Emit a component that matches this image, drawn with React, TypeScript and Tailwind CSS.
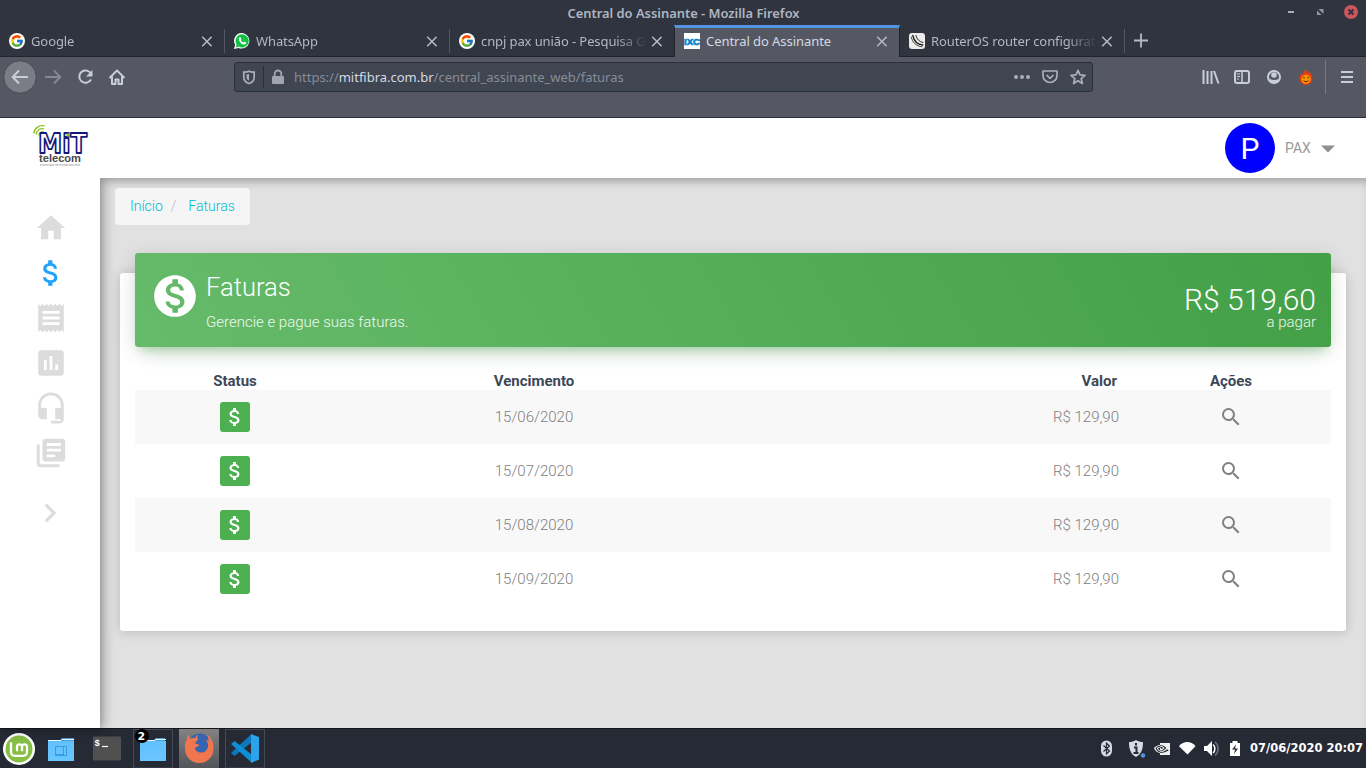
import type { ReactNode } from "react";
import { FcGoogle } from "react-icons/fc";
import { BsNvidia } from "react-icons/bs";
import {
  MdAssessment,
  MdAttachMoney,
  MdChevronRight,
  MdHeadsetMic,
  MdHome,
  MdLibraryBooks,
  MdMonetizationOn,
  MdReceipt,
  MdSearch,
} from "react-icons/md";

const GoogleIcon = () => (
  <span className="flex size-4 items-center justify-center rounded-full bg-white">
    <FcGoogle size={14} />
  </span>
);

const WhatsAppIcon = () => (
  <svg viewBox="0 0 16 16" className="size-4">
    <path d="M8.2 0A7.8 7.8 0 1 1 4.4 14.9L0 16l1.2-4.2A7.8 7.8 0 0 1 8.2 0z" fill="#fff" />
    <path d="M8.2 1.3A6.6 6.6 0 1 1 4.8 13.6L1.7 14.4l.9-3A6.6 6.6 0 0 1 8.2 1.3z" fill="#12c143" />
    <path d="M5.7 4.3c.4-.3.8-.2 1 .2l.6 1.4c.1.3-.5.8-.6 1.1.6 1.2 1.5 2 2.7 2.5.4 0 .8-.9 1.1-.8l1.5.7c.3.2.1 1-.3 1.5-1 .9-2.3.6-3.6 0C6.6 10.1 5.4 8.7 5 7.3c-.3-1.200 0-2.400.7-3z" fill="#fff" />
  </svg>
);

const IxcIcon = () => (
  <svg viewBox="0 0 16 16" className="size-4">
    <rect width="16" height="16" fill="#fff" />
    <text x="0" y="12" textLength="16" lengthAdjust="spacingAndGlyphs" fill="#0a83c9" stroke="#0a83c9" strokeWidth=".7" className="font-['Liberation_Sans'] text-[9.5px] font-bold">IXC</text>
  </svg>
);

const RouterIcon = () => (
  <svg viewBox="0 0 16 16" className="size-4">
    <rect width="16" height="16" rx="3" fill="#ececec" />
    <g fill="none" stroke="#1a1a1a" strokeLinecap="round">
      <path d="M2.3 4C3.3 9.5 7 13 13 13.8" strokeWidth=".8" />
      <path d="M3.8 2.5C5 8 8.5 11.5 13.8 12" strokeWidth="1.3" />
      <path d="M7 2.5C7.5 6 10.5 9 14 9.5" strokeWidth=".9" />
    </g>
  </svg>
);

function Tab({ icon, title, active, line = true }: { icon: ReactNode; title: string; active?: boolean; line?: boolean }) {
  return (
    <div
      className={
        active
          ? "relative z-10 -ml-px flex h-8 w-[226px] border-x border-t-3 border-x-[#22242c] border-t-[#5294e2] bg-[#555863] pl-[9px] text-[#d3dae3]"
          : "relative flex h-8 w-[225px] border-b border-b-[#22242c] pl-[9px] pt-[3px] text-[#b0b8c4]"
      }
    >
      <span className="mt-[5px] h-4 w-4 shrink-0">{icon}</span>
      <div
        className={
          active
            ? "h-[26px] w-[172px] shrink-0 overflow-hidden pl-1.5 text-[13px] leading-[27px] tracking-[-0.05px] whitespace-nowrap"
            : "h-[26px] w-[172px] shrink-0 overflow-hidden pl-1.5 text-[13px] leading-[27px] tracking-[-0.1px] whitespace-nowrap [mask-image:linear-gradient(to_right,black_82%,transparent)]"
        }
      >
        {title}
      </div>
      <svg viewBox="0 0 11 11" className="mt-2 ml-[4px] size-[11px] shrink-0">
        <path d="M1.2.8l9.400 9.400M10.600.8L1.200 10.200" stroke="#b4bac5" strokeWidth="1.5" />
      </svg>
      {line && !active && <span className="absolute top-1 right-0 h-6 w-px bg-[#555862]" />}
    </div>
  );
}

function TitleBar() {
  return (
    <div className="flex h-[25px] items-center pt-0.5">
      <div className="w-[101px]" />
      <div className="flex-1 text-center text-[12.9px] font-semibold text-[#aeb6c2]">Central do Assinante - Mozilla Firefox</div>
      <svg viewBox="0 0 100 25" className="h-[25px] w-[100px]">
        <rect x="22" y="10" width="6" height="2" fill="#a7adb8" />
        <path d="M52.5 8h5v5zM51 9.5v4.500h4.500z" fill="#9298a3" />
        <circle cx="85" cy="11" r="7" fill="#cc575d" />
        <path d="M82.5 8.500l5 5M87.500 8.500l-5 5" stroke="#2f343f" strokeWidth="2" />
      </svg>
    </div>
  );
}

function NavBar() {
  return (
    <div className="flex h-[61px] items-start border-b border-[#2b2d38] bg-[#555863]">
      <svg viewBox="0 0 234 40" className="h-10 w-[234px] shrink-0" fill="none" stroke="#c8ced8" strokeWidth="2">
        <circle cx="20" cy="20" r="16.300" fill="#7a7d85" stroke="#464853" strokeWidth="1" />
        <path d="M13 20h15M19 13.500L12.700 20l6.300 6.500" />
        <g stroke="#868993">
          <path d="M45 20h15M54 13.500l6.300 6.500-6.300 6.500" />
        </g>
        <path d="M91.200 17.200A6.200 6.200 0 1 0 91 22.500" />
        <path d="M92.500 13v6.500h-6.500z" fill="#c8ced8" stroke="none" />
        <path d="M109.500 21L117 13.500l7.500 7.500M112 19.500V27h3.500v-4.500h3V27h3.500v-7.500" strokeLinejoin="round" />
      </svg>
      <div className="mt-[5px] flex h-[30px] w-[859px] shrink-0 items-center rounded-[3px] border border-[#2b2e3a] bg-[#404552]">
        <svg viewBox="0 0 58 28" className="h-7 w-[58px]" fill="none">
          <path d="M14 8.200c1.700.9 3.500.9 5.200.8v5c0 3.500-2 5.500-5.200 6.500-3.200-1-5.200-3-5.200-6.500V9c1.700.1 3.500.1 5.200-.8z" stroke="#a9afba" strokeWidth="1.700" />
          <path d="M14 11v6.800c-1.600-.8-2.500-1.900-2.500-4v-2.400c.9 0 1.700-.1 2.500-.4z" fill="#a9afba" />
          <path d="M28.500 3v22" stroke="#2b2e3a" />
          <rect x="37" y="13" width="12" height="8" rx="1" fill="#a0a6b1" />
          <path d="M39.700 13.500v-2.700a3.300 3.300 0 0 1 6.600 0v2.700" stroke="#a0a6b1" strokeWidth="1.800" />
        </svg>
        <div className="flex-1 pt-px pl-px text-[13px] tracking-[-0.01px] whitespace-nowrap text-[#878c97]">
          https://<span className="text-[#d3dae3]">mitfibra.com.br</span>/central_assinante_web/faturas
        </div>
        <svg viewBox="0 0 92 28" className="h-7 w-[92px]" fill="none" stroke="#a9afba" strokeWidth="1.700">
          <g fill="#a9afba" stroke="none">
            <circle cx="16" cy="14" r="2" />
            <circle cx="22" cy="14" r="2" />
            <circle cx="28" cy="14" r="2" />
          </g>
          <g transform="translate(1 0)" strokeLinejoin="round">
            <path d="M42 8h14v4.500a7 7 0 0 1-14 0z" />
            <path d="M45.500 12l3.500 3.300 3.500-3.300" />
            <path d="M77 7.300l2 4.600 5 .4-3.800 3.300 1.200 4.900-4.400-2.700-4.400 2.700 1.200-4.900-3.800-3.300 5-.4z" />
          </g>
        </svg>
      </div>
      <svg viewBox="0 0 273 40" className="h-10 w-[273px]" fill="none" stroke="#c8ced8">
        <path d="M110.500 13v14M114.500 14v13M118.500 14v13M121 14l4.500 12.500" strokeWidth="2" />
        <rect x="142" y="14" width="14" height="12" rx="2" strokeWidth="2" />
        <path d="M149 14v12" strokeWidth="1.500" />
        <path d="M144 17h3M144 19.500h3M144 22h2" />
        <circle cx="181" cy="20" r="6" strokeWidth="2" />
        <circle cx="181" cy="18" r="2.800" fill="#c8ced8" stroke="none" />
        <path d="M176.500 21.500c2 2 7 2 9 0l-1 4h-7z" fill="#c8ced8" stroke="none" />
        <path d="M212.500 12c1 2 2.500 2.500 2.500 4l2-1.500c0 2 2.500 4 2.500 7a6.500 6.500 0 0 1-13 0c0-3 1.500-3.500 2-5.500l1.500 1.500c.5-2 1.500-3 2.500-5.500z" fill="#e83c17" stroke="none" />
        <circle cx="213" cy="22.300" r="4.500" fill="#f90" stroke="none" />
        <path d="M211 19.700v2M215 19.700v2M210.500 23.500c1.500 1.600 3.500 1.600 5 0" stroke="#4a1c08" strokeWidth="1" />
        <path d="M232.500 3v34" stroke="#777a84" />
        <path d="M248 15h12M248 20h12M248 25h12" strokeWidth="2" />
      </svg>
    </div>
  );
}

function MitLogo() {
  return (
    <svg viewBox="0 0 60 48" className="h-12 w-[60px]" fill="none">
      <g stroke="#8cc220" strokeWidth="1.300">
        <path d="M1.800 9.500a8.500 8.500 0 0 1 11-7.500" />
        <path d="M4.300 10.500a6 6 0 0 1 8-5.500" />
        <path d="M6.800 11.500a4 4 0 0 1 5-3.700" />
      </g>
      <text x="6" y="28.500" textLength="49" lengthAdjust="spacingAndGlyphs" fill="#fff" stroke="#15187c" strokeWidth="1.800" strokeLinejoin="round" className="font-['DejaVu_Sans'] text-[27px] font-bold">MiT</text>
      <circle cx="36" cy="11" r="1.700" fill="#8cc220" />
      <text x="7" y="38" textLength="42" lengthAdjust="spacingAndGlyphs" fill="#4a4a4a" className="font-['Liberation_Sans'] text-[10.5px] font-bold">telecom</text>
      <text x="8" y="42" textLength="40" lengthAdjust="spacingAndGlyphs" fill="#888" className="font-['Liberation_Sans'] text-[3px]">internet por um mundo mais feliz</text>
    </svg>
  );
}

function PageHeader() {
  return (
    <header className="relative z-20 flex h-[60px] shrink-0 items-center bg-white pl-8">
      <MitLogo />
      <div className="ml-auto flex items-center">
        <span className="flex size-[50px] items-center justify-center rounded-full bg-[#0000ff] text-[30px] text-white">P</span>
        <span className="ml-2.5 w-[27px] text-[14px] text-[#999]">PAX</span>
        <svg viewBox="0 0 14 8" className="mt-0.5 mr-[31px] ml-[9px] h-2 w-3.5">
          <path d="M0 .5h14L7 7.500z" fill="#8f8f8f" />
        </svg>
      </div>
    </header>
  );
}

function Sidebar() {
  return (
    <nav className="relative z-10 flex w-[100px] shrink-0 flex-col items-center gap-[11px] bg-white pt-[33px] pl-px text-[#dcdcdc] shadow-[2px_0_12px_rgba(0,0,0,0.4)]">
      <MdHome size={34} />
      <MdAttachMoney size={34} className="text-[#22a2fb]" />
      <MdReceipt size={34} />
      <MdAssessment size={34} />
      <MdHeadsetMic size={34} />
      <MdLibraryBooks size={34} />
      <MdChevronRight size={38} className="mt-[13px] mr-px" />
    </nav>
  );
}

const invoices = ["15/06/2020", "15/07/2020", "15/08/2020", "15/09/2020"];

function Invoices() {
  return (
    <section className="mx-5 mt-12 flex h-[358px] flex-col rounded-[3px] bg-white px-[15px] shadow-[0_1px_12px_rgba(0,0,0,0.18)]">
      <div className="-mt-5 flex h-[94px] shrink-0 rounded-[3px] bg-[linear-gradient(60deg,#66bb6a,#43a047)] px-[15px] text-white shadow-[0_12px_20px_-10px_rgba(76,175,80,0.28),0_4px_20px_rgba(0,0,0,0.12),0_7px_8px_-5px_rgba(76,175,80,0.3)]">
        <MdMonetizationOn size={50} className="mt-[18px]" />
        <div className="ml-1.5 pt-[18px]">
          <h1 className="text-[25.6px] leading-8 font-light">Faturas</h1>
          <p className="mt-2.5 text-[15px] leading-[18px] font-light text-white/90">Gerencie e pague suas faturas.</p>
        </div>
        <div className="ml-auto pt-[33px] text-right font-light">
          <div className="text-[30px] leading-7">R$ 519,60</div>
          <div className="text-[15px] leading-4 text-white/90">a pagar</div>
        </div>
      </div>
      <div className="mt-6 grid h-[19px] shrink-0 grid-cols-[200px_1fr_1fr_200px] pt-px text-center text-[15px] leading-[19px] font-bold text-[#3c4858]">
        <span>Status</span>
        <span>Vencimento</span>
        <span className="pr-[14px] text-right">Valor</span>
        <span>Ações</span>
      </div>
      <div>
        {invoices.map((date) => (
          <div key={date} className="grid h-[54px] grid-cols-[200px_1fr_1fr_200px] items-center justify-items-center text-[15px] font-light text-[#808080] odd:bg-[#f8f8f8]">
            <span className="flex size-[30px] items-center justify-center rounded-[3px] bg-[#4caf50] text-white">
              <MdAttachMoney size={24} />
            </span>
            <span>{date}</span>
            <span className="justify-self-end pr-3">R$ 129,90</span>
            <MdSearch size={24} />
          </div>
        ))}
      </div>
    </section>
  );
}

function Taskbar() {
  return (
    <footer className="flex h-10 shrink-0 items-center border-t border-[#14161c] bg-[#252a35]">
      <svg viewBox="0 0 270 40" className="h-10 w-[270px]" fill="none">
        <defs>
          <linearGradient id="activeTask" x1="0" y1="0" x2="0" y2="1">
            <stop offset="0" stopColor="#828282" />
            <stop offset="1" stopColor="#515359" />
          </linearGradient>
          <linearGradient id="folder" x1="0" y1="0" x2="0" y2="1">
            <stop offset="0" stopColor="#62c0fc" />
            <stop offset="1" stopColor="#6ac6ff" />
          </linearGradient>
        </defs>
        <circle cx="19" cy="20" r="16" fill="#fff" />
        <circle cx="19" cy="20" r="13.500" fill="#87be44" />
        <path d="M11 13.300v9.500c0 3 1.500 4 4 4h8c2.500 0 4-1.500 4-4v-5c0-1.600-1-2.500-2.500-2.500S22 16.200 22 17.800v4.500m0-4.500c0-1.600-1-2.500-2.500-2.500S17 16.200 17 17.800v4.500" stroke="#fff" strokeWidth="2.300" />

        <path d="M48 11h12l2-2h12v4H48z" fill="#479fdd" />
        <path d="M48 12h26v20H48z" fill="url(#folder)" />
        <path d="M48 11.500h13l1-1h12" stroke="#eaf6ff" />
        <path d="M55.500 17.500h11v9h-11zM63.500 17.500v9M55.500 25.500h8" stroke="#2f9fe8" />

        <rect x="93" y="7.500" width="28" height="24" rx="1" fill="#505050" />
        <text x="94.500" y="17" fill="#fff" className="font-['Liberation_Mono'] text-[9px] font-bold">$</text>
        <path d="M102 17.500h6" stroke="#fff" strokeWidth="1.200" />

        <rect x="133.500" y=".5" width="39" height="38.500" stroke="#454954" />
        <path d="M140 11h14l2-2h9v4h-25z" fill="#479fdd" />
        <path d="M140 12h26v20h-26z" fill="url(#folder)" />
        <path d="M140 11.500h14l2-1h10" stroke="#eaf6ff" />
        <circle cx="142" cy="7" r="7" fill="#000" />
        <text x="137.500" y="10.500" fill="#fff" className="font-['DejaVu_Sans'] text-[11px] font-bold">2</text>

        <rect x="179" width="40" height="40" fill="url(#activeTask)" />
        <circle cx="200" cy="16.500" r="12" fill="#3565b0" />
        <path d="M188 5c.3 2 1.200 3.500 2.500 4.500 1.500-.5 3-.7 4.500-.3.500-1.500 1.500-2.500 3-3.200-1 2-.5 3.200 0 4.200-.5 1.800-2.500 2.300-3 4.300l4 1.300c0 2.200-2.500 1.700-4 3.200 0 4.500 8 6.500 11.500 2 2.500-3 2-7-1-10.500 1.300.2 2.300 1 3 2 .3-3-.7-5-2-7.200 4 2 7.200 7 7 14.200a14 14 0 0 1-28.500.5c-.5-4.500.5-7.500 2-9.500-.2-2 .1-4 1-5.500z" fill="#f1764f" />

        <rect x="225.500" y=".5" width="39" height="38.500" stroke="#454954" />
        <g transform="translate(0 -.5)">
          <path d="M234.500 27.500L251.500 14V5.500L231 24.500z" fill="#0d78bb" />
          <path d="M234.500 12.500L251.500 26v8L231 15.500z" fill="#0d8fd6" />
          <path d="M251 5.500l8 3v22.500l-8 3.500z" fill="#2ba2ea" />
        </g>
      </svg>
      <svg viewBox="0 0 50 40" className="ml-auto h-10 w-[50px]" fill="none">
        <rect x="2" y="11.500" width="11" height="16" rx="5.500" fill="#d3dae3" />
        <path d="M4.500 16.500l6 5.500-3 2.800V14.200l3 2.800-6 5.500" stroke="#252a35" strokeWidth="1.200" />
        <path d="M37 11c2.500 1.500 4.500 2 7 2 0 7-1.500 12-7 15-5.500-3-7-8-7-15 2.500 0 4.500-.5 7-2z" fill="#d3dae3" />
        <path d="M37 14v2.500M35 18.500h2.500v5.500M34.500 24h5" stroke="#252a35" strokeWidth="2" />
        <circle cx="44" cy="26.500" r="2.200" fill="#5294e2" />
      </svg>
      <BsNvidia size={16} className="ml-[5px] text-[#f0f0f0]" />
      <svg viewBox="0 0 80 40" className="h-10 w-20" fill="none">
        <path d="M9 17.200c4.500-5.500 12-5.500 16.500 0L17.500 25.500z" fill="#fff" />
        <path d="M34 17h3l5-5v15l-5-5h-3z" fill="#fff" />
        <path d="M43 15.500c2.500 1.800 2.500 6.500 0 8.300" stroke="#fff" strokeWidth="1.500" />
        <path d="M45 13c4.200 3.500 4.200 10 0 13.500" stroke="#6c707a" strokeWidth="1.500" />
        <path d="M60 14h2.500v-2h5v2H70v13H60z" fill="#fff" />
        <path d="M66 15.500l-4 5h3l-1 4.500 4-5.500h-3z" fill="#252a35" />
      </svg>
      <span className="w-[116px] shrink-0 font-['DejaVu_Sans'] text-[11.5px] font-bold whitespace-nowrap text-white">07/06/2020 20:07</span>
    </footer>
  );
}

export default function App() {
  return (
    <div className="flex h-[768px] w-[1366px] flex-col overflow-hidden bg-[#2f343f] font-['Noto_Sans',sans-serif]">
      <TitleBar />
      <div className="flex h-8">
        <Tab icon={<GoogleIcon />} title="Google" />
        <Tab icon={<WhatsAppIcon />} title="WhatsApp" />
        <Tab icon={<GoogleIcon />} title="cnpj pax união - Pesquisa Go" line={false} />
        <Tab icon={<IxcIcon />} title="Central do Assinante" active />
        <Tab icon={<RouterIcon />} title="RouterOS router configurat" />
        <div className="flex-1 border-b border-[#22242c]">
          <svg viewBox="0 0 32 31" className="h-[31px] w-8">
            <path d="M9 15.500h14M16 8.500v14" stroke="#b4bac5" strokeWidth="1.800" />
          </svg>
        </div>
      </div>
      <NavBar />
      <div className="flex min-h-0 flex-1 flex-col bg-[#e1e1e1] font-['Roboto',sans-serif]">
        <PageHeader />
        <div className="flex min-h-0 flex-1">
          <Sidebar />
          <main className="flex min-w-0 flex-1 flex-col pt-2.5 shadow-[inset_0_8px_10px_-5px_rgba(0,0,0,0.3)]">
            <div className="ml-[15px] flex h-[37px] w-[135px] shrink-0 items-center rounded bg-[#f5f5f5] pl-[15px] text-[14px] font-light text-[#00bcd4]">
              <span>Início</span>
              <span className="ml-2 text-[#bbb]">/</span>
              <span className="ml-3">Faturas</span>
            </div>
            <Invoices />
          </main>
        </div>
      </div>
      <Taskbar />
    </div>
  );
}
